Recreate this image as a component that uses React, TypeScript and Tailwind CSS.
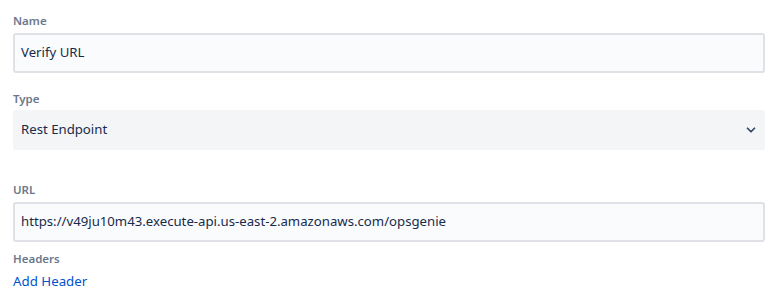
import { ChevronDown } from 'lucide-react'

const Label = ({ children }: { children: React.ReactNode }) => (
  <div className="text-[11.5px] leading-4 font-semibold text-[#6b778c]">{children}</div>
)

export default function App() {
  return (
    <div className="w-[778px] h-[302px] bg-white pl-[13px] pr-[13px] pt-[13px] font-['Segoe_UI','Noto_Sans',sans-serif] text-[13.2px] text-[#172b4d]">
      <Label>Name</Label>
      <div className="mt-[4px] h-[40px] rounded-[3px] border-2 border-[#dfe1e6] bg-[#fafbfc] px-[6px] flex items-center">
        Verify URL
      </div>

      <div className="mt-[18px]">
        <Label>Type</Label>
      </div>
      <div className="mt-[3px] h-[40px] rounded-[3px] bg-[#f4f5f7] pl-[8px] pr-[7px] flex items-center justify-between">
        <span>Rest Endpoint</span>
        <ChevronDown size={14} strokeWidth={3} className="text-[#344563]" />
      </div>

      <div className="mt-[32px]">
        <Label>URL</Label>
      </div>
      <div className="mt-[4px] h-[40px] rounded-[3px] border-2 border-[#dfe1e6] bg-[#fafbfc] px-[6px] flex items-center">
        https://v49ju10m43.execute-api.us-east-2.amazonaws.com/opsgenie
      </div>

      <div className="mt-[9px]">
        <Label>Headers</Label>
      </div>
      <a href="#" className="block mt-[4px] text-[13.3px] text-[#0052cc] leading-5">Add Header</a>
    </div>
  )
}
